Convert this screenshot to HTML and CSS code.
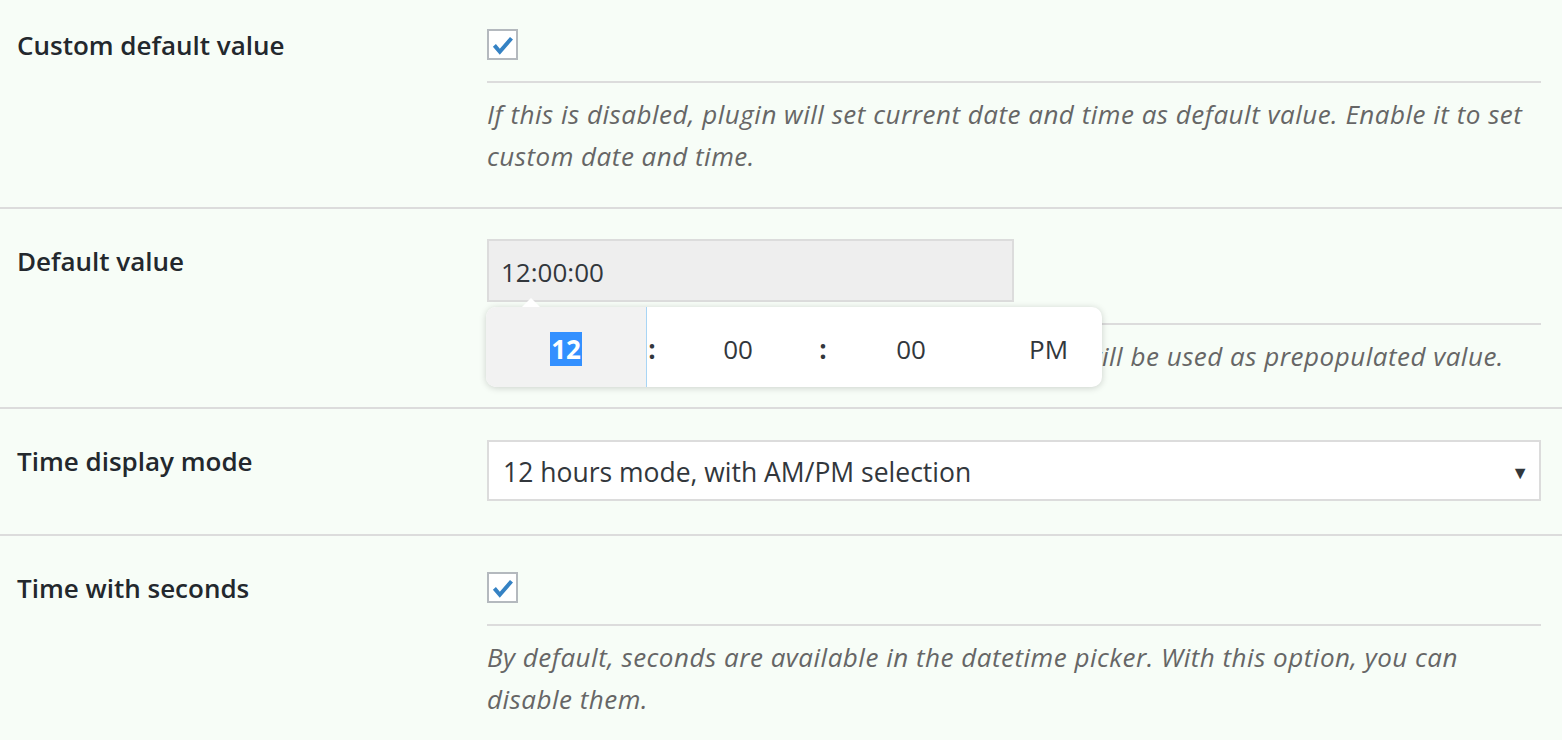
FILE: index.html
```html
<!DOCTYPE html>
<html lang="en">
<head>
    <meta charset="UTF-8">
    <meta name="viewport" content="width=device-width, initial-scale=1.0">
    <title>Date and time field settings</title>
    <link rel="stylesheet" href="styles.css">
</head>
<body>
    <div class="settings">
        <div class="row">
            <div class="label">Custom default value</div>
            <div class="field">
                <span class="checkbox">
                    <svg viewBox="0 0 30 30" width="30" height="30"><path d="M6 16 L12 23 L25 8" /></svg>
                </span>
                <p class="description">If this is disabled, plugin will set current date and time as default value. Enable it to set custom date and time.</p>
            </div>
        </div>

        <div class="row">
            <div class="label">Default value</div>
            <div class="field">
                <div class="picker-wrap">
                    <div class="text-input">12:00:00</div>
                    <div class="timepicker">
                        <div class="tp-cell tp-hour"><span class="tp-selected">12</span></div>
                        <div class="tp-sep">:</div>
                        <div class="tp-cell">00</div>
                        <div class="tp-sep">:</div>
                        <div class="tp-cell">00</div>
                        <div class="tp-cell">PM</div>
                    </div>
                </div>
                <p class="description">Set the custom default date and time value which will be used as prepopulated value.</p>
            </div>
        </div>

        <div class="row row-select">
            <div class="label">Time display mode</div>
            <div class="field">
                <div class="select">
                    <span>12 hours mode, with AM/PM selection</span>
                    <span class="select-arrow">&#9660;</span>
                </div>
            </div>
        </div>

        <div class="row">
            <div class="label">Time with seconds</div>
            <div class="field">
                <span class="checkbox">
                    <svg viewBox="0 0 30 30" width="30" height="30"><path d="M6 16 L12 23 L25 8" /></svg>
                </span>
                <p class="description">By default, seconds are available in the datetime picker. With this option, you can disable them.</p>
            </div>
        </div>
    </div>
</body>
</html>
```

FILE: styles.css
```css
body {
    margin: 0;
    background: #f7fdf7;
    font-family: "Open Sans", "Noto Sans", sans-serif;
    color: #23282d;
    overflow: hidden;
}
.settings {
    margin-top: -7px;
}
.row {
    display: grid;
    grid-template-columns: 470px 1fr;
    padding: 0 21px 30px 17px;
    border-bottom: 2px solid #dcdcdc;
}
.label {
    padding-top: 31px;
    font-size: 26px;
    line-height: 42px;
    font-weight: 600;
}
.field {
    padding-top: 36px;
}
.row:nth-child(2) .field {
    padding-top: 30px;
}
.row-select .field {
    padding-top: 31px;
    padding-bottom: 3px;
}
.checkbox {
    display: block;
    box-sizing: border-box;
    width: 31px;
    height: 31px;
    background: #fff;
    border: 2px solid #b4b9be;
}
.checkbox svg {
    display: block;
    width: 27px;
    height: 27px;
}
.checkbox path {
    fill: none;
    stroke: #3582c4;
    stroke-width: 4.4;
}
.description {
    margin: 21px 0 0;
    padding-top: 10px;
    border-top: 2px solid #dcdcdc;
    font-size: 26px;
    letter-spacing: 0.5px;
    line-height: 42px;
    font-style: italic;
    color: #666;
}
.picker-wrap {
    position: relative;
}
.text-input {
    box-sizing: border-box;
    width: 527px;
    height: 63px;
    padding: 0 12px;
    background: #eee;
    border: 2px solid #dcdcdc;
    font-size: 26px;
    line-height: 62px;
    color: #32373c;
}
.timepicker {
    position: absolute;
    top: 68px;
    left: -1px;
    z-index: 2;
    display: grid;
    grid-template-columns: 161px 10px 162px 8px 168px 1fr;
    width: 616px;
    height: 80px;
    background: #fff;
    border-radius: 10px;
    box-shadow: 0 1px 7px rgba(0, 0, 0, 0.18);
    font-size: 26px;
    color: #32373c;
}
.timepicker::before {
    content: "";
    position: absolute;
    top: -9px;
    left: 36px;
    border: 9px solid transparent;
    border-top: 0;
    border-bottom-color: #fff;
}
.tp-cell,
.tp-sep {
    display: flex;
    align-items: center;
    justify-content: center;
    padding-top: 4px;
}
.tp-sep {
    font-weight: 700;
}
.tp-hour {
    background: #f2f2f2;
    border-right: 1px solid #a8d5f5;
    border-radius: 10px 0 0 10px;
}
.tp-selected {
    padding: 0 1px;
    background: #3390ff;
    color: #fff;
    font-weight: 700;
    line-height: 34px;
}
.select {
    display: flex;
    align-items: center;
    justify-content: space-between;
    box-sizing: border-box;
    height: 61px;
    padding: 2px 10px 0 14px;
    background: #fff;
    border: 2px solid #dcdcdc;
    font-size: 26.5px;
    color: #32373c;
}
.select-arrow {
    font-size: 18px;
}
```
